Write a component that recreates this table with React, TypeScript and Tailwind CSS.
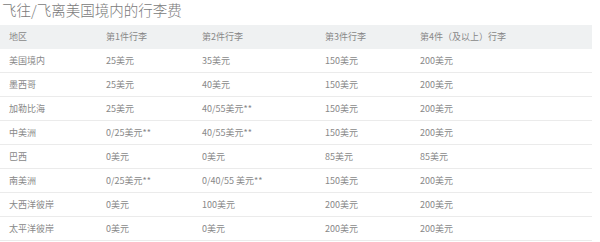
const rows: string[][] = [
  ['美国境内', '25美元', '35美元', '150美元', '200美元'],
  ['墨西哥', '25美元', '40美元', '150美元', '200美元'],
  ['加勒比海', '25美元', '40/55美元**', '150美元', '200美元'],
  ['中美洲', '0/25美元**', '40/55美元**', '150美元', '200美元'],
  ['巴西', '0美元', '0美元', '85美元', '85美元'],
  ['南美洲', '0/25美元**', '0/40/55 美元**', '150美元', '200美元'],
  ['大西洋彼岸', '0美元', '100美元', '200美元', '200美元'],
  ['太平洋彼岸', '0美元', '0美元', '200美元', '200美元'],
]

const headers = ['地区', '第1件行李', '第2件行李', '第3件行李', '第4件（及以上）行李']

const cols = 'grid grid-cols-[97px_96px_123px_95px_181px]'

export default function App() {
  return (
    <div className="w-[600px] h-[242px] overflow-hidden bg-white font-['Noto_Sans_CJK_SC','Noto_Sans',sans-serif]">
      <h1 className="h-[25px] pl-[2px] text-[14.5px] leading-[19px] text-[#7a7a7a] font-light">
        飞往/飞离美国境内的行李费
      </h1>
      <div className="w-[592px]">
        <div className={`${cols} h-[24px] items-center bg-[#eff1f2] text-[9px] text-[#888]`}>
          {headers.map((h) => (
            <div key={h} className="pl-[9px]">
              {h}
            </div>
          ))}
        </div>
        {rows.map((r) => (
          <div
            key={r[0]}
            className={`${cols} h-[24px] items-center border-b border-[#ebebeb] text-[9px] text-[#888]`}
          >
            {r.map((c, i) => (
              <div key={i} className="pl-[9px]">
                {c}
              </div>
            ))}
          </div>
        ))}
      </div>
    </div>
  )
}
